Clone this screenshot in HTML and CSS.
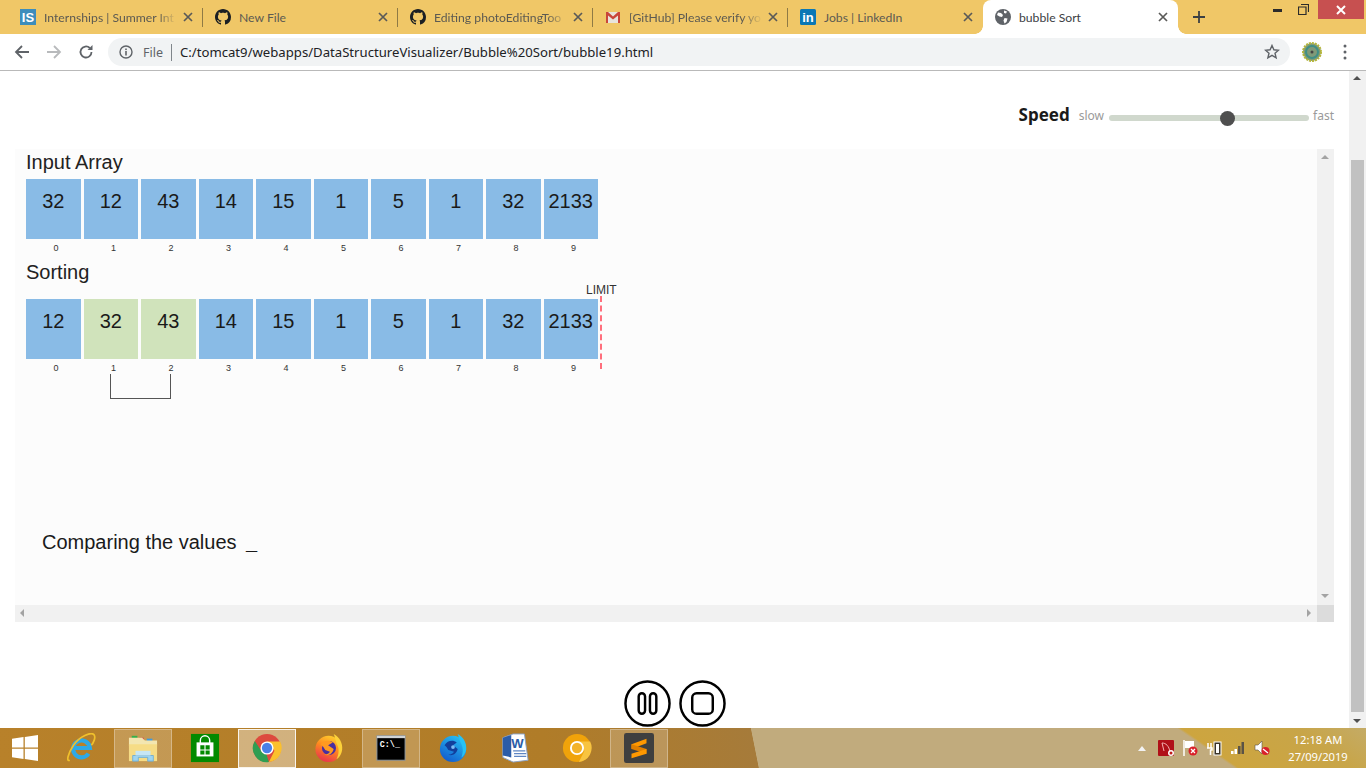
FILE: index.html
```html
<!DOCTYPE html>
<html lang="en">
<head>
    <meta charset="UTF-8">
    <title>bubble Sort</title>
    <link rel="stylesheet" href="styles.css">
</head>
<body>
    <svg class="sprites" xmlns="http://www.w3.org/2000/svg">
        <symbol id="i-github" viewBox="0 0 16 16"><path fill="#1b1f23" d="M8 0C3.58 0 0 3.58 0 8c0 3.54 2.29 6.53 5.47 7.59.4.07.55-.17.55-.38 0-.19-.01-.82-.01-1.49-2.01.37-2.53-.49-2.69-.94-.09-.23-.48-.94-.82-1.13-.28-.15-.68-.52-.01-.53.63-.01 1.08.58 1.23.82.72 1.21 1.87.87 2.33.66.07-.52.28-.87.51-1.07-1.78-.2-3.64-.89-3.64-3.95 0-.87.31-1.59.82-2.15-.08-.2-.36-1.02.08-2.12 0 0 .67-.21 2.2.82.64-.18 1.32-.27 2-.27.68 0 1.36.09 2 .27 1.53-1.04 2.2-.82 2.2-.82.44 1.1.16 1.92.08 2.12.51.56.82 1.27.82 2.15 0 3.07-1.87 3.75-3.65 3.95.29.25.54.73.54 1.48 0 1.07-.01 1.93-.01 2.2 0 .21.15.46.55.38A8.013 8.013 0 0016 8c0-4.42-3.58-8-8-8z"/></symbol>
        <symbol id="i-close" viewBox="0 0 10 10"><path d="M1 1l8 8M9 1l-8 8" stroke="#5a5a58" stroke-width="1.7" fill="none"/></symbol>
        <defs>
            <linearGradient id="g-fox" x1="0.7" y1="0" x2="0.3" y2="1"><stop offset="0" stop-color="#ffcf2e"/><stop offset=".45" stop-color="#ff8a1e"/><stop offset="1" stop-color="#e8304e"/></linearGradient>
            <linearGradient id="g-bird" x1="0.8" y1="0" x2="0.2" y2="1"><stop offset="0" stop-color="#27c2f5"/><stop offset="1" stop-color="#1258cc"/></linearGradient>
        </defs>
    </svg>

    <!-- tab strip -->
    <div class="tabstrip">
        <div class="tab">
            <svg class="favicon" viewBox="0 0 16 16"><rect width="16" height="16" fill="#3d8dbc"/><text x="8" y="13" class="fav-is">IS</text></svg>
            <span class="tab-title">Internships | Summer Int</span>
            <svg class="tab-close"><use href="#i-close"/></svg>
        </div>
        <div class="tab">
            <svg class="favicon"><use href="#i-github"/></svg>
            <span class="tab-title tab-title-short">New File</span>
            <svg class="tab-close"><use href="#i-close"/></svg>
        </div>
        <div class="tab">
            <svg class="favicon"><use href="#i-github"/></svg>
            <span class="tab-title">Editing photoEditingToo</span>
            <svg class="tab-close"><use href="#i-close"/></svg>
        </div>
        <div class="tab">
            <svg class="favicon" viewBox="0 0 16 16"><path fill="#e8e4dc" d="M1 3h14v11H1z"/><path fill="#c9463a" d="M1 3h2l5 4.500L13 3h2v11h-2V6.500L8 10.500 3 6.500V14H1z"/></svg>
            <span class="tab-title">[GitHub] Please verify yo</span>
            <svg class="tab-close"><use href="#i-close"/></svg>
        </div>
        <div class="tab tab-nosep">
            <svg class="favicon" viewBox="0 0 16 16"><rect width="16" height="16" rx="1.500" fill="#0a77b5"/><text x="8" y="13" class="fav-in">in</text></svg>
            <span class="tab-title tab-title-short">Jobs | LinkedIn</span>
            <svg class="tab-close"><use href="#i-close"/></svg>
        </div>
        <div class="tab tab-active">
            <svg class="favicon" viewBox="0 0 16 16"><circle cx="8" cy="8" r="8" fill="#5f6368"/><path fill="#fff" d="M3 3.500l3 .5 2 2-1 2-2.500-.5L2 6zM9 1.500l3 1-1 2-2-.5zM9.500 9l3 .5-1 3.500-2 1.500-1-3z"/></svg>
            <span class="tab-title tab-title-short">bubble Sort</span>
            <svg class="tab-close"><use href="#i-close"/></svg>
        </div>
        <svg class="new-tab" viewBox="0 0 12 12"><path d="M6 0v12M0 6h12" stroke="#3c4043" stroke-width="1.800"/></svg>
        <div class="win-controls">
            <svg class="win-min" viewBox="0 0 9 3"><rect width="9" height="3" fill="#2b2b2b"/></svg>
            <svg class="win-restore" viewBox="0 0 11 11"><path d="M3 .5h7.500V8M.5 3h7.500v7.500H.5z" fill="none" stroke="#2b2b2b" stroke-width="1.200"/></svg>
            <div class="win-close"><svg viewBox="0 0 10 10"><path d="M1 1l8 8M9 1l-8 8" stroke="#fff" stroke-width="2"/></svg></div>
        </div>
    </div>

    <!-- address bar -->
    <div class="toolbar">
        <svg class="tool-icon" viewBox="0 0 16 16"><path d="M15 8H2M8 2L2 8l6 6" fill="none" stroke="#5f6368" stroke-width="1.800"/></svg>
        <svg class="tool-icon" viewBox="0 0 16 16"><path d="M1 8h13M8 2l6 6-6 6" fill="none" stroke="#b8babc" stroke-width="1.800"/></svg>
        <svg class="tool-icon" viewBox="0 0 16 16"><path d="M13.500 8a5.500 5.500 0 1 1-1.700-4" fill="none" stroke="#5f6368" stroke-width="1.800"/><path d="M14.500 1v5h-5z" fill="#5f6368"/></svg>
        <div class="omnibox">
            <svg class="omni-info" viewBox="0 0 14 14"><circle cx="7" cy="7" r="6" fill="none" stroke="#5f6368" stroke-width="1.400"/><rect x="6.200" y="6" width="1.600" height="4.500" fill="#5f6368"/><rect x="6.200" y="3.500" width="1.600" height="1.600" fill="#5f6368"/></svg>
            <span class="omni-file">File</span>
            <span class="omni-sep"></span>
            <span class="omni-url">C:/tomcat9/webapps/DataStructureVisualizer/Bubble%20Sort/bubble19.html</span>
            <svg class="omni-star" viewBox="0 0 16 16"><path d="M8 1.500l1.900 4.300 4.600.4-3.500 3 1.100 4.600L8 11.400l-4.100 2.400L5 9.200l-3.500-3 4.600-.4z" fill="none" stroke="#5f6368" stroke-width="1.400"/></svg>
        </div>
        <svg class="avatar" viewBox="0 0 20 20"><circle cx="10" cy="10" r="9" fill="#7f9a78" stroke="#b5b53a" stroke-width="2" stroke-dasharray="2 1"/><circle cx="10" cy="10" r="6" fill="none" stroke="#3f8f86" stroke-width="2"/><circle cx="10" cy="10" r="1.500" fill="#444"/></svg>
        <svg class="menu-dots" viewBox="0 0 4 16"><circle cx="2" cy="2" r="1.500" fill="#5f6368"/><circle cx="2" cy="8" r="1.500" fill="#5f6368"/><circle cx="2" cy="14" r="1.500" fill="#5f6368"/></svg>
    </div>

    <!-- page -->
    <div class="viewport">
        <div class="page">
            <div class="speed-row">
                <span class="speed-label">Speed</span>
                <span class="speed-end">slow</span>
                <div class="slider"><div class="slider-thumb"></div></div>
                <span class="speed-end">fast</span>
            </div>

            <div class="panel">
                <div class="panel-body">
                    <h3 class="array-title">Input Array</h3>
                    <div class="cells">
                        <div class="cell-col"><div class="cell">32</div><div class="cell-index">0</div></div>
                        <div class="cell-col"><div class="cell">12</div><div class="cell-index">1</div></div>
                        <div class="cell-col"><div class="cell">43</div><div class="cell-index">2</div></div>
                        <div class="cell-col"><div class="cell">14</div><div class="cell-index">3</div></div>
                        <div class="cell-col"><div class="cell">15</div><div class="cell-index">4</div></div>
                        <div class="cell-col"><div class="cell">1</div><div class="cell-index">5</div></div>
                        <div class="cell-col"><div class="cell">5</div><div class="cell-index">6</div></div>
                        <div class="cell-col"><div class="cell">1</div><div class="cell-index">7</div></div>
                        <div class="cell-col"><div class="cell">32</div><div class="cell-index">8</div></div>
                        <div class="cell-col"><div class="cell">2133</div><div class="cell-index">9</div></div>
                    </div>
                    <h3 class="array-title sorting-title">Sorting</h3>
                    <div class="cells">
                        <div class="cell-col"><div class="cell">12</div><div class="cell-index">0</div></div>
                        <div class="cell-col"><div class="cell cell-compare">32</div><div class="cell-index">1</div></div>
                        <div class="cell-col"><div class="cell cell-compare">43</div><div class="cell-index">2</div></div>
                        <div class="cell-col"><div class="cell">14</div><div class="cell-index">3</div></div>
                        <div class="cell-col"><div class="cell">15</div><div class="cell-index">4</div></div>
                        <div class="cell-col"><div class="cell">1</div><div class="cell-index">5</div></div>
                        <div class="cell-col"><div class="cell">5</div><div class="cell-index">6</div></div>
                        <div class="cell-col"><div class="cell">1</div><div class="cell-index">7</div></div>
                        <div class="cell-col"><div class="cell">32</div><div class="cell-index">8</div></div>
                        <div class="cell-col"><div class="cell">2133</div><div class="cell-index">9</div></div>
                        <div class="limit-label">LIMIT</div>
                        <div class="limit-line"></div>
                        <div class="bracket"></div>
                    </div>
                    <p class="status">Comparing the values <span class="status-mark">_</span></p>
                </div>
                <div class="panel-vscroll"><span class="arrow arrow-up"></span><span class="arrow arrow-down"></span></div>
                <div class="panel-hscroll"><span class="arrow arrow-left"></span><span class="arrow arrow-right"></span></div>
                <div class="panel-corner"></div>
            </div>

            <div class="controls">
                <svg class="ctrl-btn" viewBox="0 0 48 48"><circle cx="24" cy="24" r="22.500" fill="none" stroke="#000" stroke-width="2.500"/><rect x="15" y="13.500" width="6.500" height="21" rx="3.250" fill="none" stroke="#000" stroke-width="2.500"/><rect x="26.500" y="13.500" width="6.500" height="21" rx="3.250" fill="none" stroke="#000" stroke-width="2.500"/></svg>
                <svg class="ctrl-btn" viewBox="0 0 48 48"><circle cx="24" cy="24" r="22.500" fill="none" stroke="#000" stroke-width="2.500"/><rect x="13.500" y="13.500" width="21" height="21" rx="4.500" fill="none" stroke="#000" stroke-width="2.500"/></svg>
            </div>
        </div>
        <div class="page-scroll">
            <span class="arrow arrow-up"></span>
            <div class="page-thumb"></div>
            <span class="arrow arrow-down"></span>
        </div>
    </div>

    <!-- taskbar -->
    <div class="taskbar">
        <svg class="start-logo" viewBox="0 0 26 26"><path fill="#fff" d="M0 3.700l11.500-1.600v10.300H0zM12.800 1.900L26 0v12.400H12.800zM0 13.700h11.500v10.200L0 22.300zM12.800 13.700H26V26l-13.200-1.900z"/></svg>
        <div class="task-items">
            <div class="task-item">
                <!-- internet explorer -->
                <svg viewBox="0 0 32 32"><path d="M24 22a9 9 0 1 1 1.500-6H8" fill="none" stroke="#2ea9e6" stroke-width="4.500"/><path d="M4 29C0 31 2 22 8 13 14 4 27-2 30 2c2 3-1 9-3 11" fill="none" stroke="#f0c02c" stroke-width="1.800"/></svg>
            </div>
            <div class="task-item task-open">
                <!-- file explorer -->
                <svg viewBox="0 0 32 32"><rect x="4" y="3" width="6" height="3" fill="#35b04a"/><rect x="12" y="5" width="5" height="3" fill="#d9534f"/><rect x="20" y="6" width="6" height="3" fill="#3f9be0"/><path fill="#f3e6b0" d="M1 5h14l3 3h13v6H1z"/><path fill="#f6dc86" d="M1 12h30v18H1z"/><path fill="#9fd4ef" stroke="#5ea6d6" stroke-width=".8" d="M5 24h22v6h-6v-4H11v4H5z"/><path fill="#c6e6f5" d="M8 19h16v5H8z"/></svg>
            </div>
            <div class="task-item">
                <!-- store -->
                <svg viewBox="0 0 32 32"><rect x="1" y="1" width="30" height="30" fill="#038a00"/><path d="M11 12V8a5 5 0 0 1 10 0v4" fill="none" stroke="#fff" stroke-width="1.500"/><path fill="#fff" d="M7 10h18v15H7z"/><path fill="#038a00" d="M15.400 13v4.500H11V13zM21 13v4.500h-4.400V13zM15.400 18.700V23H11v-4.300zM21 18.700V23h-4.400v-4.300z"/></svg>
            </div>
            <div class="task-item task-active">
                <!-- chrome -->
                <svg viewBox="0 0 32 32"><circle cx="16" cy="16" r="15" fill="#dd4b3e"/><path fill="#fbc02d" d="M16 9h14a15 15 0 0 1-12 21.800L24 19z"/><path fill="#2f9e52" d="M3 8.500l7.500 11.500 5 3 2.500 8A15 15 0 0 1 3 8.500z"/><circle cx="16" cy="16" r="7" fill="#fff"/><circle cx="16" cy="16" r="5.500" fill="#4a80e8"/></svg>
            </div>
            <div class="task-item">
                <!-- firefox -->
                <svg viewBox="0 0 32 32"><circle cx="15.500" cy="17" r="14" fill="url(#g-fox)"/><path fill="#fcd23a" d="M21 1c6 3 10 10 9 17-1 5-3 8-6 10 3-6 3-12 0-17-1-4-2-7-3-10z"/><circle cx="16" cy="16" r="7.500" fill="#4a2fa0"/><path fill="#ff9a20" d="M7 12c3-4 9-5 13-2l-5 3 6 4c-1 5-6 8-10 6 3 0 5-1 6-3l-5-2-2-3z"/></svg>
            </div>
            <div class="task-item task-open">
                <!-- cmd -->
                <svg viewBox="0 0 32 32"><rect x="1" y="3" width="30" height="26" fill="#000" stroke="#8d99a6"/><rect x="1" y="3" width="30" height="2.500" fill="#cfd3d6"/><text x="4" y="15" class="cmd-text">C:\_</text></svg>
            </div>
            <div class="task-item">
                <!-- thunderbird -->
                <svg viewBox="0 0 32 32"><circle cx="16" cy="17" r="14" fill="url(#g-bird)"/><path fill="#27c2f5" d="M21 1c6 3 10 10 9 17-1 4-3 7-5 8 2-6 2-11-1-16-1-3-2-6-3-9z"/><path fill="#123f9c" d="M7 13c3-5 9-6 13-3l-4 3 5 4c-1 5-6 8-10 6 3 0 5-1 6-3l-6-2-2-3z"/><circle cx="16" cy="15" r="2" fill="#7bbcf5"/></svg>
            </div>
            <div class="task-item">
                <!-- word -->
                <svg viewBox="0 0 32 32"><path fill="#fff" stroke="#8aa2c8" d="M3 5l11-4h12l4 28-16 2-11-5z"/><path fill="#2b5ca8" d="M3 5l9-3v24l-9-2z"/><text x="12" y="16" class="word-text">W</text><path d="M14 19h13M15 22h13M15 25h13" stroke="#5f86c4" stroke-width="1.300"/></svg>
            </div>
            <div class="task-item">
                <!-- canary -->
                <svg viewBox="0 0 32 32"><circle cx="16" cy="16" r="15" fill="#f0a30a"/><path fill="#f8c440" d="M16 9h14a15 15 0 0 1-12 21.800L24 19z"/><circle cx="16" cy="16" r="7.500" fill="#fff"/><circle cx="16" cy="16" r="5.500" fill="#f3b32a"/></svg>
            </div>
            <div class="task-item task-open">
                <!-- sublime text -->
                <svg viewBox="0 0 32 32"><rect width="32" height="32" rx="2.500" fill="#3f3f3f"/><path fill="#ff9800" d="M8 12l16-6v5L8 17z"/><path fill="#e07f00" d="M8 12l16 5v5L8 17z"/><path fill="#ff9800" d="M8 22l16-5v5L8 27z"/></svg>
            </div>
        </div>
        <div class="tray">
            <span class="tray-arrow"></span>
            <svg class="tray-icon" viewBox="0 0 16 16"><rect width="16" height="16" rx="1" fill="#b01018"/><path d="M4 3c4 0 7 3 8 9M4 3l2 8" fill="none" stroke="#f3b0b0" stroke-width="1"/><circle cx="13" cy="13" r="3" fill="#fff"/><circle cx="13" cy="13" r="1.500" fill="#c01818"/></svg>
            <svg class="tray-icon" viewBox="0 0 16 16"><path d="M2 0v16" stroke="#fff" stroke-width="1.500"/><path d="M3 1h9v7H3z" fill="#fff"/><circle cx="11" cy="11" r="4.500" fill="#d9202a"/><path d="M9 9l4 4M13 9l-4 4" stroke="#fff" stroke-width="1.300"/></svg>
            <svg class="tray-icon" viewBox="0 0 16 16"><path d="M1 8h5v2H4.500v5M2 3v5M5 3v5" stroke="#fff" stroke-width="1.500" fill="none"/><rect x="8" y="2" width="7" height="13" fill="#3a3428" stroke="#fff"/><rect x="10" y="4" width="3" height="9" fill="#fff"/></svg>
            <svg class="tray-icon" viewBox="0 0 16 16"><rect x="1" y="11" width="2.500" height="3" fill="#fff"/><rect x="4.500" y="9" width="2.500" height="5" fill="#fff"/><rect x="8" y="6" width="2.500" height="8" fill="#5a5346"/><rect x="11.500" y="2" width="2.500" height="12" fill="#5a5346"/></svg>
            <svg class="tray-icon" viewBox="0 0 16 16"><path d="M1 5h3l4-4v13L4 10H1z" fill="#fff" stroke="#5a5346" stroke-width=".6"/><circle cx="11.500" cy="11" r="4" fill="#d9202a"/><path d="M9 9l5 4" stroke="#fff" stroke-width="1.300"/></svg>
            <div class="clock"><div>12:18 AM</div><div>27/09/2019</div></div>
        </div>
    </div>
</body>
</html>
```

FILE: styles.css
```css
* {
    box-sizing: border-box;
}

html, body {
    margin: 0;
    height: 100%;
    overflow: hidden;
}

body {
    display: flex;
    flex-direction: column;
    background: #fff;
    font-family: "Liberation Sans", Arial, sans-serif;
}

.sprites {
    position: absolute;
    width: 0;
    height: 0;
}

/* tab strip */
.tabstrip {
    display: flex;
    height: 34px;
    padding-left: 8px;
    background: #f0c767;
    flex: none;
}

.tab {
    position: relative;
    display: flex;
    align-items: center;
    width: 195px;
    padding: 0 10px 0 12px;
    font-family: "Lato", sans-serif;
    font-size: 12.200px;
    color: #5c5a52;
}

.tab::after {
    content: "";
    position: absolute;
    right: 0;
    top: 8px;
    height: 19px;
    width: 1px;
    background: #8f7a45;
}

.tab-nosep::after {
    display: none;
}

.tab-active {
    background: #fff;
    color: #3c4043;
    border-radius: 8px 8px 0 0;
}

/* flared bottom corners of the open tab */
.tab-active::before,
.tab-active::after {
    content: "";
    position: absolute;
    top: auto;
    bottom: 0;
    width: 8px;
    height: 8px;
    background: radial-gradient(circle at 0 0, transparent 7.500px, #fff 8px);
}

.tab-active::before {
    left: -8px;
}

.tab-active::after {
    right: -8px;
    background: radial-gradient(circle at 100% 0, transparent 7.500px, #fff 8px);
}

.favicon {
    width: 16px;
    height: 16px;
    flex: none;
    margin-right: 8px;
}

.fav-is,
.fav-in {
    font: bold 13px "Liberation Sans", sans-serif;
    fill: #fff;
    text-anchor: middle;
}

.tab-title {
    flex: 1;
    white-space: nowrap;
    -webkit-mask-image: linear-gradient(to right, #000 85%, transparent 100%);
    mask-image: linear-gradient(to right, #000 85%, transparent 100%);
}

.tab-title-short {
    -webkit-mask-image: none;
    mask-image: none;
}

.tab-close {
    width: 10px;
    height: 10px;
    flex: none;
    margin-left: 6px;
}

.new-tab {
    width: 12px;
    height: 12px;
    margin: 11px 0 0 15px;
}

.win-controls {
    display: flex;
    margin-left: auto;
    margin-right: 2px;
    align-items: flex-start;
}

.win-min {
    width: 9px;
    height: 3px;
    margin: 9px 16px 0 0;
}

.win-restore {
    width: 11px;
    height: 11px;
    margin: 4px 9px 0 0;
}

.win-close {
    display: flex;
    align-items: center;
    justify-content: center;
    width: 46px;
    height: 19px;
    background: #c75050;
}

.win-close svg {
    width: 10px;
    height: 10px;
}

/* address bar */
.toolbar {
    display: flex;
    align-items: center;
    height: 37px;
    padding-left: 14px;
    background: #fff;
    border-bottom: 1px solid #b9b9b9;
    flex: none;
}

.tool-icon {
    width: 16px;
    height: 16px;
    margin-right: 16px;
}

.omnibox {
    display: flex;
    align-items: center;
    width: 1182px;
    height: 28px;
    margin-left: -2px;
    padding: 0 10px 0 11px;
    background: #f1f3f4;
    border-radius: 14px;
    font-family: "Noto Sans", sans-serif;
    font-size: 13.150px;
    color: #202124;
}

.omni-info {
    width: 14px;
    height: 14px;
    margin-right: 10px;
}

.omni-file {
    color: #5f6368;
    font-size: 12.500px;
}

.omni-sep {
    width: 1px;
    height: 17px;
    margin: 0 9px 0 8px;
    background: #80868b;
}

.omni-url {
    flex: 1;
    white-space: nowrap;
    margin-left: -1px;
}

.omni-star {
    width: 16px;
    height: 16px;
}

.avatar {
    width: 20px;
    height: 20px;
    margin-left: 12px;
}

.menu-dots {
    width: 4px;
    height: 16px;
    margin-left: 21px;
}

/* page */
.viewport {
    display: flex;
    height: 657px;
    flex: none;
}

.page {
    flex: 1;
    display: flex;
    flex-direction: column;
    padding: 32px 15px 0;
}

.speed-row {
    display: flex;
    align-items: center;
    justify-content: flex-end;
    height: 24px;
    font-family: "Noto Sans", sans-serif;
}

.speed-label {
    font-size: 17px;
    font-weight: 700;
    color: #1a1a1a;
    margin: 0 9px 2px 0;
}

.speed-end {
    font-size: 12px;
    color: #9a9a9a;
}

.slider {
    position: relative;
    width: 200px;
    height: 6px;
    margin: 6px 4px 0 5px;
    background: #d0d8cd;
    border-radius: 3px;
}

.slider-thumb {
    position: absolute;
    left: 111px;
    top: -4.500px;
    width: 15px;
    height: 15px;
    border-radius: 50%;
    background: #4f4f4f;
}

.panel {
    display: grid;
    grid-template-columns: 1fr 17px;
    grid-template-rows: 456px 17px;
    height: 473px;
    margin-top: 22px;
    background: #fcfcfc;
}

.panel-body {
    padding: 0 0 0 11px;
    overflow: hidden;
}

.array-title {
    margin: 0;
    padding-top: 2px;
    height: 30px;
    font-size: 20px;
    line-height: 23px;
    font-weight: 400;
    color: #222;
}

.sorting-title {
    height: 38px;
    padding-top: 0;
    margin-top: -1px;
}

.cells {
    position: relative;
    display: flex;
    gap: 3px;
}

.cell-col {
    width: 54.500px;
}

.cell {
    display: flex;
    justify-content: center;
    height: 60px;
    padding-top: 10px;
    background: #89bbe6;
    font-size: 20px;
    line-height: 25px;
    color: #1a1a1a;
}

.cell-compare {
    background: #d0e3bb;
}

.cell-index {
    height: 23px;
    padding-top: 4px;
    padding-left: 5.500px;
    text-align: center;
    font-size: 9px;
    line-height: 11px;
    color: #333;
}

.limit-label {
    position: absolute;
    left: 560px;
    top: -16px;
    font-size: 12px;
    line-height: 14px;
    color: #333;
}

.limit-line {
    position: absolute;
    left: 574px;
    top: -3px;
    height: 73px;
    border-left: 2px dashed #ff6f7d;
}

.bracket {
    position: absolute;
    left: 84px;
    top: 75px;
    width: 61px;
    height: 25px;
    border: 1px solid #555;
    border-top: 0;
}

.status {
    margin: 0;
    padding: 149px 0 0 16px;
    font-size: 20px;
    line-height: 23px;
    color: #1a1a1a;
}

.status-mark {
    margin-left: 4px;
    font-weight: 700;
}

.panel-vscroll,
.panel-hscroll {
    position: relative;
    background: #f1f1f1;
}

.panel-corner {
    background: #dcdcdc;
}

.arrow {
    position: absolute;
    width: 0;
    height: 0;
    border: 4px solid transparent;
}

.arrow-up {
    top: 6px;
    left: 4px;
    border-top: 0;
    border-bottom-color: #a3a3a3;
}

.arrow-down {
    bottom: 7px;
    left: 4px;
    border-bottom: 0;
    border-top-color: #a3a3a3;
}

.arrow-left {
    left: 5px;
    top: 4px;
    border-left: 0;
    border-right-color: #a3a3a3;
}

.arrow-right {
    right: 6px;
    top: 4px;
    border-right: 0;
    border-left-color: #a3a3a3;
}

.controls {
    display: flex;
    justify-content: center;
    gap: 8px;
    margin-top: 58px;
}

.ctrl-btn {
    width: 47px;
    height: 47px;
}

.page-scroll {
    position: relative;
    width: 17px;
    background: #f1f1f1;
    padding-top: 89px;
}

.page-scroll .arrow-up {
    top: 5px;
    border-bottom-color: #505050;
}

.page-scroll .arrow-down {
    bottom: 5px;
    border-top-color: #505050;
}

.page-thumb {
    width: 13px;
    margin-left: 2px;
    height: 552px;
    background: #c1c1c1;
}

/* taskbar */
.taskbar {
    display: flex;
    align-items: center;
    height: 40px;
    flex: none;
    background:
        linear-gradient(34.600deg, transparent 86.700%, #cda53f 87%, #c8a548 95%, #c4ab66 100%),
        linear-gradient(78.700deg, #b8812a 0, #b07c28 40%, #a67b3a 55.200%, #c1ab7d 55.250%, #c1ab7d 100%);
    color: #fff;
}

.start-logo {
    width: 26px;
    height: 26px;
    margin: 0 3px 0 12px;
    flex: none;
}

.task-items {
    display: flex;
    gap: 4px;
    margin-left: 11px;
}

.task-item {
    display: flex;
    align-items: center;
    justify-content: center;
    width: 58px;
    height: 39px;
    border: 1px solid transparent;
}

.task-item svg {
    width: 30px;
    height: 30px;
}

.task-open {
    background: rgba(255, 255, 255, .2);
    border-color: rgba(255, 255, 255, .3);
}

.task-active {
    background: rgba(255, 255, 255, .4);
    border-color: rgba(255, 255, 255, .85);
}

.cmd-text {
    font: bold 9px "Liberation Mono", monospace;
    fill: #fff;
}

.word-text {
    font: bold 14px "Liberation Sans", sans-serif;
    fill: #2b5ca8;
}

.tray {
    display: flex;
    align-items: center;
    margin-left: auto;
    padding-right: 17px;
}

.tray-arrow {
    width: 0;
    height: 0;
    border: 4px solid transparent;
    border-top: 0;
    border-bottom: 5px solid #f2f2f2;
    margin-right: 12px;
}

.tray-icon {
    width: 16px;
    height: 16px;
    margin-right: 8px;
}

.clock {
    width: 62px;
    margin-left: 9px;
    font-family: "Noto Sans", sans-serif;
    font-size: 11.200px;
    line-height: 17px;
    text-align: center;
}
```
